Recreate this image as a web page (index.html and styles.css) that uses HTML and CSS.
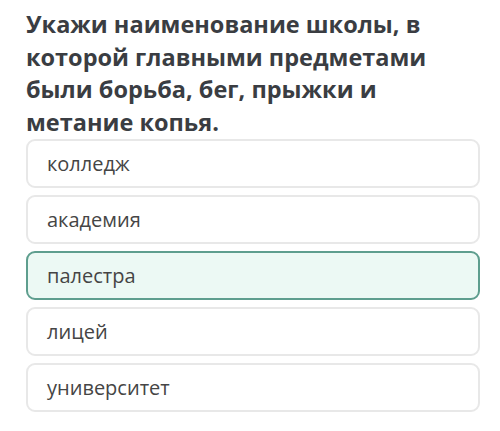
FILE: index.html
```html
<!DOCTYPE html>
<html lang="ru">
<head>
<meta charset="utf-8">
<link rel="stylesheet" href="styles.css">
</head>
<body>
<div class="quiz">
  <h1 class="question">Укажи наименование школы, в которой главными предметами были борьба, бег, прыжки и метание копья.</h1>
  <div class="options">
    <div class="option">колледж</div>
    <div class="option">академия</div>
    <div class="option option-selected">палестра</div>
    <div class="option">лицей</div>
    <div class="option">университет</div>
  </div>
</div>
</body>
</html>
```
FILE: styles.css
```css
html, body {
  margin: 0;
  padding: 0;
  background: #ffffff;
}
.quiz {
  font-family: "Open Sans", "Noto Sans", sans-serif;
  padding: 8px 20px 0 26px;
  width: 454px;
}
.question {
  margin: 0;
  font-size: 23.5px;
  font-weight: 700;
  line-height: 32.5px;
  color: #3a3d42;
  width: 430px;
}
.options {
  display: flex;
  flex-direction: column;
  gap: 7px;
  margin-top: 1px;
}
.option {
  box-sizing: border-box;
  height: 49px;
  border: 2px solid #e8e8e8;
  border-radius: 9px;
  padding: 0 19px;
  display: flex;
  align-items: center;
  font-size: 20px;
  color: #454545;
  background: #ffffff;
}
.option-selected {
  background: #ecf9f4;
  border-color: #5e9e8e;
}
```
